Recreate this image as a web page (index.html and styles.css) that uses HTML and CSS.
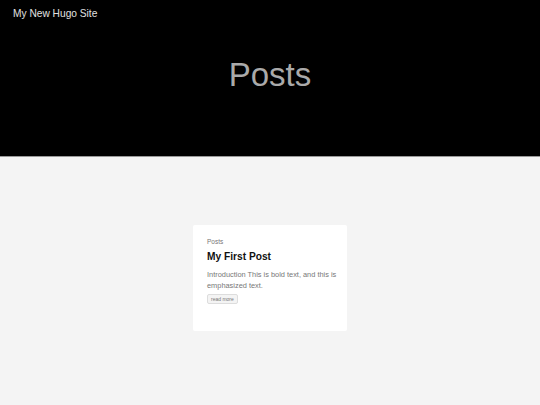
FILE: index.html
```html
<!DOCTYPE html>
<html>
<head>
<meta charset="utf-8">
<link rel="stylesheet" href="styles.css">
</head>
<body>
<header class="hero">
  <nav class="topbar"><a class="site-title" href="#">My New Hugo Site</a></nav>
  <h1 class="page-title">Posts</h1>
</header>
<main class="content">
  <article class="card">
    <div class="card-section">Posts</div>
    <h2 class="card-title">My First Post</h2>
    <p class="card-summary">Introduction This is bold text, and this is emphasized text.</p>
    <a class="read-more" href="#">read more</a>
  </article>
</main>
</body>
</html>
```
FILE: styles.css
```css
html, body {
  margin: 0;
  padding: 0;
  background: #f4f4f4;
  font-family: "Liberation Sans", Arial, sans-serif;
}
.hero {
  background: #000;
  height: 157px;
  border-bottom: 1px solid #999;
  box-sizing: border-box;
  display: flex;
  flex-direction: column;
  align-items: stretch;
}
.topbar {
  padding: 6px 13px 0;
  line-height: 12px;
}
.site-title {
  color: #e0e0e0;
  text-decoration: none;
  font-size: 10.2px;
}
.page-title {
  margin: 38px 0 0;
  text-align: center;
  font-weight: normal;
  font-size: 33px;
  color: #aaa;
  line-height: 1;
}
.content {
  display: flex;
  justify-content: center;
  padding-top: 68px;
  height: 248px;
  box-sizing: border-box;
}
.card {
  background: #fff;
  width: 154px;
  height: 106px;
  box-sizing: border-box;
  padding: 13px 6px 12px 14px;
  border-radius: 2px;
  display: flex;
  flex-direction: column;
  align-items: flex-start;
}
.card-section {
  font-size: 6.5px;
  line-height: 7px;
  color: #777;
}
.card-title {
  margin: 5px 0 0;
  font-size: 10.2px;
  line-height: 13px;
  font-weight: bold;
  color: #111;
}
.card-summary {
  margin: 6px 0 0;
  font-size: 7.4px;
  line-height: 11px;
  color: #777;
}
.read-more {
  margin-top: 3px;
  font-size: 5px;
  line-height: 6px;
  color: #777;
  text-decoration: none;
  background: #f4f4f4;
  border: 1px solid #ddd;
  border-radius: 2px;
  padding: 1px 3px;
}
```
